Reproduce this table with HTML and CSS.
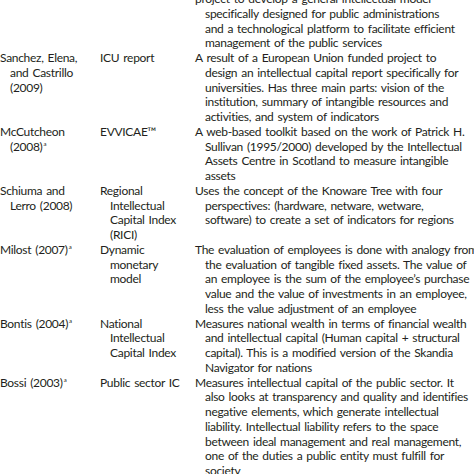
FILE: index.html
```html
<!DOCTYPE html>
<html>
<head>
<meta charset="utf-8">
<link rel="stylesheet" href="styles.css">
</head>
<body>
<div class="table">
  <div class="row">
    <div class="cell author"></div>
    <div class="cell model"></div>
    <div class="cell desc">project to develop a general intellectual model<br>specifically designed for public administrations<br>and a technological platform to facilitate efficient<br>management of the public services</div>
  </div>
  <div class="row">
    <div class="cell author">Sanchez, Elena,<br>and Castrillo<br>(2009)</div>
    <div class="cell model">ICU report</div>
    <div class="cell desc">A result of a European Union funded project to<br>design an intellectual capital report specifically for<br>universities. Has three main parts: vision of the<br>institution, summary of intangible resources and<br>activities, and system of indicators</div>
  </div>
  <div class="row">
    <div class="cell author">McCutcheon<br>(2008)<sup>a</sup></div>
    <div class="cell model">EVVICAE™</div>
    <div class="cell desc">A web-based toolkit based on the work of Patrick H.<br>Sullivan (1995/2000) developed by the Intellectual<br>Assets Centre in Scotland to measure intangible<br>assets</div>
  </div>
  <div class="row">
    <div class="cell author">Schiuma and<br>Lerro (2008)</div>
    <div class="cell model">Regional<br>Intellectual<br>Capital Index<br>(RICI)</div>
    <div class="cell desc">Uses the concept of the Knoware Tree with four<br>perspectives: (hardware, netware, wetware,<br>software) to create a set of indicators for regions</div>
  </div>
  <div class="row">
    <div class="cell author">Milost (2007)<sup>a</sup></div>
    <div class="cell model">Dynamic<br>monetary<br>model</div>
    <div class="cell desc">The evaluation of employees is done with analogy from<br>the evaluation of tangible fixed assets. The value of<br>an employee is the sum of the employee’s purchase<br>value and the value of investments in an employee,<br>less the value adjustment of an employee</div>
  </div>
  <div class="row">
    <div class="cell author">Bontis (2004)<sup>a</sup></div>
    <div class="cell model">National<br>Intellectual<br>Capital Index</div>
    <div class="cell desc">Measures national wealth in terms of financial wealth<br>and intellectual capital (Human capital + structural<br>capital). This is a modified version of the Skandia<br>Navigator for nations</div>
  </div>
  <div class="row">
    <div class="cell author">Bossi (2003)<sup>a</sup></div>
    <div class="cell model">Public sector IC</div>
    <div class="cell desc">Measures intellectual capital of the public sector. It<br>also looks at transparency and quality and identifies<br>negative elements, which generate intellectual<br>liability. Intellectual liability refers to the space<br>between ideal management and real management,<br>one of the duties a public entity must fulfill for<br>society</div>
  </div>
</div>
</body>
</html>
```

FILE: styles.css
```css
html, body {
  margin: 0;
  padding: 0;
  background: #ffffff;
}

body {
  font-family: Lato, "Open Sans", sans-serif;
  font-size: 12px;
  line-height: 14.75px;
  letter-spacing: -0.3px;
  word-spacing: 1.2px;
  color: #231f20;
  overflow: hidden;
}

.table {
  margin-top: -8px;
}

.row {
  display: grid;
  grid-template-columns: 100px 95px 1fr;
}

.cell {
  padding-left: 10px;
  text-indent: -10px;
  white-space: nowrap;
}

.author {
  padding-left: 10px;
}

sup {
  font-size: 6px;
  line-height: 0;
  vertical-align: 5px;
  margin-left: 1px;
}
```
